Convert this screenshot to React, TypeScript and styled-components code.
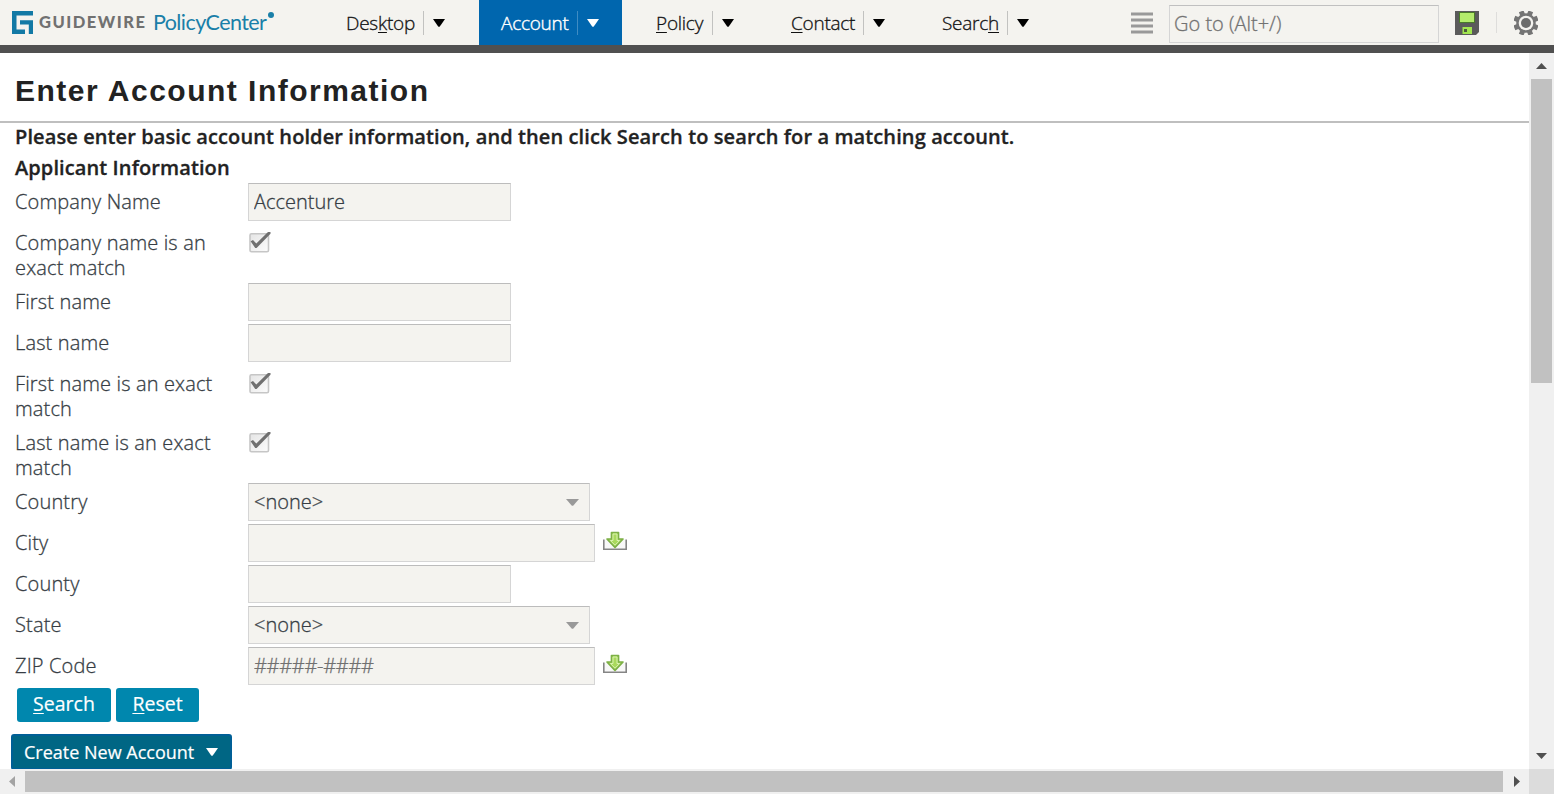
import React from "react";
import styled, { createGlobalStyle } from "styled-components";

const GlobalStyle = createGlobalStyle`
  * { box-sizing: border-box; }
  body { margin: 0; overflow: hidden; background: #fff; }
  body, input { font-family: "Open Sans", "Noto Sans", sans-serif; }
`;

const Page = styled.div`
  display: flex;
  flex-direction: column;
  width: 1554px;
  height: 794px;
  overflow: hidden;
  font-size: 20px;
  color: #222;
`;

const TopBar = styled.header`
  display: flex;
  height: 53px;
  flex: none;
  background: #f4f3ef;
  border-bottom: 8px solid #505050;
`;

const Brand = styled.div`
  display: flex;
  align-items: center;
  width: 324px;
  height: 44px;
  padding-left: 12px;
`;

const Company = styled.span`
  font: 900 16.5px/22px Lato, sans-serif;
  color: #717171;
  letter-spacing: 1.5px;
  margin-left: 6px;
  width: 114px;
  white-space: nowrap;
`;

const Product = styled.span`
  display: flex;
  padding-bottom: 1px;
  font: 400 21.5px/26px Lato, sans-serif;
  color: #1a7fa8;
  letter-spacing: -0.58px;
  white-space: nowrap;
`;

const Dot = styled.i`
  width: 6px;
  height: 6px;
  margin: 3px 0 0 2px;
  border-radius: 50%;
  background: #1a7fa8;
`;

const Tab = styled.a<{ $width: number; $active?: boolean; $gapAfter?: number }>`
  display: flex;
  align-items: center;
  width: ${(p) => p.$width}px;
  height: 45px;
  margin-right: ${(p) => p.$gapAfter ?? 0}px;
  padding-left: 22px;
  font-size: 19px;
  font-weight: 300;
  letter-spacing: -0.25px;
  -webkit-text-stroke: ${(p) => (p.$active ? 0.4 : 0.3)}px;
  line-height: 25px;
  color: ${(p) => (p.$active ? "#fff" : "#111")};
  background: ${(p) => (p.$active ? "#0066ae" : "transparent")};
  white-space: nowrap;
`;

const TabLabel = styled.span<{ $width: number }>`
  width: ${(p) => p.$width}px;
  padding-top: 1px;
`;

const TabDivider = styled.i<{ $active?: boolean }>`
  width: 1px;
  height: 24px;
  margin: 0 9px 0 9px;
  background: ${(p) => (p.$active ? "#3f8cc3" : "#c2c2c0")};
`;

const Mnemonic = styled.span`
  text-decoration: underline;
  text-decoration-thickness: 1px;
  text-underline-offset: 2px;
`;

const Tools = styled.div`
  display: flex;
  align-items: center;
  margin-left: auto;
  padding-right: 16px;
`;

const GoTo = styled.input`
  width: 270px;
  height: 38px;
  margin: 3px 16px 0 16px;
  padding: 0 5px 1px 4px;
  border: 1px solid #d5d5d5;
  border-top-color: #c0c0c0;
  background: #f4f3ef;
  font-size: 20px;
  font-weight: 300;
  -webkit-text-stroke: 0.3px #757575;
  outline: none;
  &::placeholder { color: #707070; opacity: 1; }
`;

const ToolDivider = styled.i`
  width: 1px;
  height: 21px;
  margin: 0 17px;
  background: #dedddb;
`;

const Body = styled.div`
  display: grid;
  flex: 1;
  grid-template-columns: 1529px 25px;
  grid-template-rows: 716px 25px;
`;

const Content = styled.main`
  overflow: hidden;
`;

const Title = styled.h1`
  height: 70px;
  margin: 0;
  padding: 20px 0 0 15px;
  border-bottom: 2px solid #bfbfbf;
  font: 700 30px/36px "Liberation Sans", Arial, sans-serif;
  letter-spacing: 1.49px;
  color: #222;
`;

const Heading = styled.div<{ $height: number }>`
  height: ${(p) => p.$height}px;
  padding: 1px 0 0 15px;
  font-size: 20px;
  font-weight: 600;
  letter-spacing: 0.1px;
  -webkit-text-stroke: 0.3px;
  line-height: 26px;
`;

const Field = styled.div`
  display: flex;
  align-items: flex-start;
  padding: 0 0 3px 15px;
`;

const Label = styled.label`
  width: 233px;
  padding: 6px 20px 0 0;
  font-size: 20px;
  font-weight: 300;
  letter-spacing: 0.15px;
  -webkit-text-stroke: 0.3px;
  line-height: 25px;
  color: #363d44;
`;

const TextBox = styled.input<{ $wide?: boolean }>`
  width: ${(p) => (p.$wide ? 347 : 263)}px;
  height: 38px;
  padding: 0 5px 1px;
  border: 1px solid #d5d5d5;
  border-top-color: #bcbcbc;
  border-radius: 0;
  background: #f4f3ef;
  font-size: 20px;
  font-weight: 300;
  -webkit-text-stroke: 0.3px;
  color: #363d44;
  outline: none;
  &::placeholder { color: #707070; opacity: 1; letter-spacing: -0.3px; }
`;

const Dropdown = styled.div`
  display: flex;
  align-items: center;
  justify-content: space-between;
  width: 342px;
  height: 38px;
  padding: 0 10px 0 5px;
  border: 1px solid #d5d5d5;
  border-top-color: #bcbcbc;
  background: #f4f3ef;
  font-size: 20px;
  font-weight: 300;
  -webkit-text-stroke: 0.3px;
  line-height: 26px;
  color: #363d44;
`;

const DropdownText = styled.span`
  padding-bottom: 1px;
`;

const CheckSlot = styled.div`
  padding-top: 8px;
  svg { display: block; }
`;

const AutoFill = styled.span`
  padding: 6px 0 0 8px;
  svg { display: block; }
`;

const Buttons = styled.div`
  display: flex;
  gap: 5px;
  padding-left: 17px;
`;

const Button = styled.button<{ $width: number }>`
  width: ${(p) => p.$width}px;
  height: 34px;
  padding: 0 0 2px;
  border: 0;
  border-radius: 3px;
  background: #0087ae;
  color: #fff;
  font: 400 19.5px/26px "Open Sans", sans-serif;
  -webkit-text-stroke: 0.2px;
`;

const CreateButton = styled.button`
  display: flex;
  align-items: center;
  width: 221px;
  height: 36px;
  margin: 12px 0 0 11px;
  padding: 0 0 0 11px;
  border: 2px solid #005f96;
  border-radius: 3px;
  background: #006684;
  color: #fff;
  font: 400 18px/25px "Open Sans", sans-serif;
  -webkit-text-stroke: 0.2px;
  white-space: nowrap;
  svg { margin-left: 12px; }
`;

const VScroll = styled.div`
  display: flex;
  flex-direction: column;
  align-items: center;
  justify-content: space-between;
  padding: 10px 0 10px;
  background: #f0f0f0;
`;

const VThumb = styled.div`
  width: 21px;
  height: 304px;
  margin: 10px 0 auto;
  background: #c1c1c1;
`;

const HScroll = styled.div`
  display: flex;
  align-items: center;
  padding: 0 9px 0 9px;
  background: #f0f0f0;
`;

const HThumb = styled.div`
  width: 1478px;
  height: 21px;
  margin: 0 11px 0 10px;
  background: #c1c1c1;
`;

const Corner = styled.div`
  background: #dcdcdc;
`;

const Caret = ({ color = "#000", w = 12, h = 8 }: { color?: string; w?: number; h?: number }) => (
  <svg width={w} height={h} viewBox="0 0 12 8" preserveAspectRatio="none"><path d="M0 0H12L6.8 7.4Q6 8.2 5.2 7.4Z" fill={color} /></svg>
);

const Logo = () => (
  <svg width="21" height="23" viewBox="0 0 21 23">
    <path fill="#1279a5" d="M0 0H21V4.500H4.500V18.500H13V23H0ZM8 9.300H21V23H16.800V13.500H8Z" />
  </svg>
);

const Floppy = () => (
  <svg width="24" height="24" viewBox="0 0 24 24">
    <path fill="#5b5b5b" d="M0 0H24V21L21 24H0Z" />
    <path fill="#4a7a2a" d="M4 1H20V12H4Z" />
    <path fill="#b4ec6c" d="M5 2H19V11H5Z" />
    <path fill="#a2e650" d="M7.500 16H17V23H7.500Z" />
    <path fill="#4b5b3c" d="M9 18H12V21H9Z" />
  </svg>
);

const Gear = () => (
  <svg width="24" height="24" viewBox="0 0 24 24">
    <g fill="#747474">
      {[22.5, 67.5, 112.5, 157.5].map((a) => (
        <path key={a} transform={`rotate(${a} 12 12)`} d="M9.500 -.6H14.500V24.600H9.500Z" />
      ))}
      <circle cx="12" cy="12" r="9.800" />
    </g>
    <circle cx="12" cy="12" r="7.300" fill="#f4f3ef" />
    <circle cx="12" cy="12" r="5" fill="#6c6c6c" />
  </svg>
);

const Check = () => (
  <svg width="23" height="24" viewBox="0 0 23 24">
    <defs>
      <linearGradient id="box" x2="1" y2="1">
        <stop stopColor="#e5e5e5" /><stop offset="1" stopColor="#fcfcfc" />
      </linearGradient>
    </defs>
    <rect x="2" y="1.800" width="18.500" height="18" rx="1.500" fill="url(#box)" stroke="#c6c6c6" strokeWidth="1.600" />
    <path d="M2.600 9.300L5 8L8.300 11.500L20 0H22.500V1.800L8.600 16H7.200Z" fill="#707070" />
  </svg>
);

const Download = () => (
  <svg width="24" height="21" viewBox="0 0 24 21">
    <path d="M.8 9.500V19.200H23.200V9.500" fill="#f8f8f8" stroke="#858585" strokeWidth="1.600" />
    <path d="M8.500 2.500H15.500V9H20L12 17.300L4 9H8.500Z" fill="#a9d95d" stroke="#7db046" strokeWidth="1.700" strokeLinejoin="round" />
    <path d="M10 4H14V10.500H16.600L12 15.200L7.400 10.500H10Z" fill="none" stroke="#d9f2ae" strokeWidth="1" />
  </svg>
);

const CheckField = ({ label }: { label: string }) => (
  <Field><Label>{label}</Label><CheckSlot><Check /></CheckSlot></Field>
);

const SelectField = ({ label, value }: { label: string; value: string }) => (
  <Field>
    <Label>{label}</Label>
    <Dropdown><DropdownText>{value}</DropdownText><Caret color="#999" w={13} h={7} /></Dropdown>
  </Field>
);

export default function App() {
  return (
    <Page>
      <GlobalStyle />
      <TopBar>
        <Brand>
          <Logo />
          <Company>GUIDEWIRE</Company>
          <Product>PolicyCenter<Dot /></Product>
        </Brand>
        <Tab $width={155}><TabLabel $width={68}>Des<Mnemonic>k</Mnemonic>top</TabLabel><TabDivider /><Caret /></Tab>
        <Tab $width={143} $gapAfter={12} $active><TabLabel $width={67}>Account</TabLabel><TabDivider $active /><Caret color="#fff" /></Tab>
        <Tab $width={135}><TabLabel $width={47}><Mnemonic>P</Mnemonic>olicy</TabLabel><TabDivider /><Caret /></Tab>
        <Tab $width={151}><TabLabel $width={63}><Mnemonic>C</Mnemonic>ontact</TabLabel><TabDivider /><Caret /></Tab>
        <Tab $width={120}><TabLabel $width={56}>Searc<Mnemonic>h</Mnemonic></TabLabel><TabDivider /><Caret /></Tab>
        <Tools>
          <svg width="22" height="22" viewBox="0 0 22 22"><path d="M0 2H22M0 8H22M0 14H22M0 20H22" stroke="#999" strokeWidth="3" /></svg>
          <GoTo placeholder="Go to (Alt+/)" />
          <Floppy />
          <ToolDivider />
          <Gear />
        </Tools>
      </TopBar>
      <Body>
        <Content>
          <Title>Enter Account Information</Title>
          <Heading $height={31}>Please enter basic account holder information, and then click Search to search for a matching account.</Heading>
          <Heading $height={29}>Applicant Information</Heading>
          <Field><Label>Company Name</Label><TextBox defaultValue="Accenture" /></Field>
          <CheckField label="Company name is an exact match" />
          <Field><Label>First name</Label><TextBox /></Field>
          <Field><Label>Last name</Label><TextBox /></Field>
          <CheckField label="First name is an exact match" />
          <CheckField label="Last name is an exact match" />
          <SelectField label="Country" value="<none>" />
          <Field><Label>City</Label><TextBox $wide /><AutoFill><Download /></AutoFill></Field>
          <Field><Label>County</Label><TextBox /></Field>
          <SelectField label="State" value="<none>" />
          <Field><Label>ZIP Code</Label><TextBox $wide placeholder="#####-####" /><AutoFill><Download /></AutoFill></Field>
          <Buttons>
            <Button $width={94}><Mnemonic>S</Mnemonic>earch</Button>
            <Button $width={83}><Mnemonic>R</Mnemonic>eset</Button>
          </Buttons>
          <CreateButton>Create New Account<Caret color="#fff" /></CreateButton>
        </Content>
        <VScroll>
          <svg width="11" height="6"><path d="M0 6L5.500 0L11 6Z" fill="#505050" /></svg>
          <VThumb />
          <svg width="11" height="6"><path d="M0 0H11L5.500 6Z" fill="#505050" /></svg>
        </VScroll>
        <HScroll>
          <svg width="6" height="11"><path d="M6 0V11L0 5.500Z" fill="#a3a3a3" /></svg>
          <HThumb />
          <svg width="6" height="11"><path d="M0 0V11L6 5.500Z" fill="#505050" /></svg>
        </HScroll>
        <Corner />
      </Body>
    </Page>
  );
}
